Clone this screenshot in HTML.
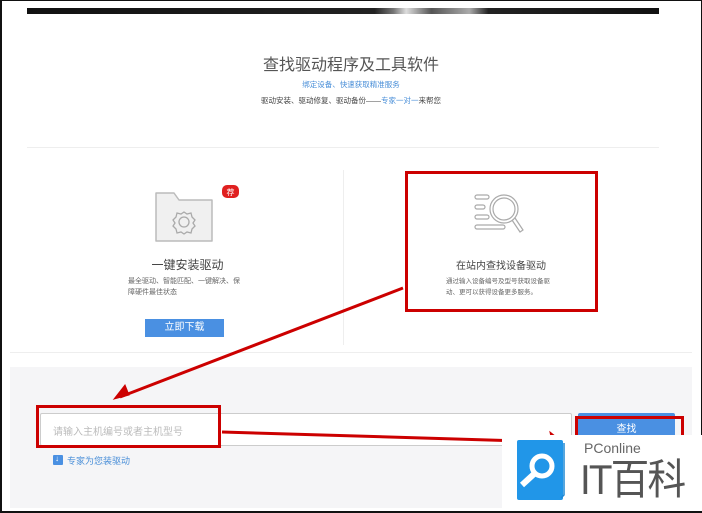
<!DOCTYPE html>
<html><head><meta charset="utf-8"><style>
*{margin:0;padding:0;box-sizing:border-box}
body{width:702px;height:513px;position:relative;overflow:hidden;background:#fff;font-family:"Liberation Sans","Noto Sans CJK SC",sans-serif;color:#555}
.a{position:absolute;white-space:nowrap}
</style></head><body>
<div class="a" style="left:0;top:0;width:702px;height:513px;border:1px solid #111;border-bottom:2px solid #111;border-left:2px solid #111"></div>
<div class="a" style="left:27px;top:8px;width:632px;height:6px;background:linear-gradient(90deg,#111 0%,#222 55%,#777 58%,#ddd 60%,#555 64%,#aaa 70%,#222 73%,#111 100%)"></div>
<div class="a" style="left:0;width:702px;top:51px;text-align:center;font-size:16px;color:#555">查找驱动程序及工具软件</div>
<div class="a" style="left:0;width:702px;top:79px;text-align:center;font-size:7.5px;color:#4a8fd8">绑定设备、快速获取精准服务</div>
<div class="a" style="left:0;width:702px;top:95px;text-align:center;font-size:7.5px;color:#444">驱动安装、驱动修复、驱动备份——<span style="color:#4a8fd8">专家一对一</span>来帮您</div>
<div class="a" style="left:27px;top:147px;width:632px;height:1px;background:#eee"></div>
<div class="a" style="left:343px;top:170px;width:1px;height:175px;background:#eee"></div>
<svg class="a" style="left:150px;top:180px" width="95" height="70">
<path d="M6 13h18l5 7h33v41H6z" fill="#f0f0f0" stroke="#bbb" stroke-width="1.5" stroke-linejoin="round"/>
<circle cx="34" cy="42" r="5" fill="none" stroke="#aaa" stroke-width="1.3"/>
<path d="M34 32l3 2 4-1 1 4 3 3-2 3 2 3-3 3-1 4-4-1-3 2-3-2-4 1-1-4-3-3 2-3-2-3 3-3 1-4 4 1z" fill="none" stroke="#aaa" stroke-width="1.3"/>
<rect x="72" y="5" width="17" height="13" rx="5" fill="#e02020"/>
<text x="80.5" y="15" font-size="8" fill="#fff" text-anchor="middle" font-family="Noto Sans CJK SC">荐</text>
</svg>
<div class="a" style="left:130px;width:115px;top:256px;text-align:center;font-size:12px;color:#444">一键安装驱动</div>
<div class="a" style="left:128px;top:276px;font-size:7px;line-height:11px;color:#666;white-space:normal;width:112px">最全驱动、智能匹配、一键解决、保障硬件最佳状态</div>
<div class="a" style="left:145px;top:319px;width:79px;height:18px;background:#4a90e2;color:#fff;font-size:10px;text-align:center;line-height:18px">立即下载</div>
<svg class="a" style="left:470px;top:190px" width="60" height="55">
<g fill="none" stroke="#aaa" stroke-width="1.2">
<rect x="5" y="5" width="14" height="4" rx="2"/><rect x="5" y="15" width="10" height="4" rx="2"/><rect x="5" y="25" width="14" height="4" rx="2"/><rect x="5" y="35" width="30" height="4" rx="2"/>
<circle cx="34" cy="19" r="14"/><circle cx="34" cy="19" r="11"/>
<path d="M42 30l8 12 3-2-8-12"/></g></svg>
<div class="a" style="left:405px;width:192px;top:257px;text-align:center;font-size:10px;color:#444">在站内查找设备驱动</div>
<div class="a" style="left:446px;top:276px;font-size:6.5px;line-height:11px;color:#666;white-space:normal;width:105px">通过输入设备编号及型号获取设备驱动、更可以获得设备更多服务。</div>
<div class="a" style="left:405px;top:171px;width:193px;height:141px;border:3px solid #c00"></div>
<div class="a" style="left:10px;top:352px;width:682px;height:1px;background:#eee"></div>
<div class="a" style="left:10px;top:367px;width:682px;height:141px;background:#f5f5f7"></div>
<div class="a" style="left:40px;top:413px;width:532px;height:33px;background:#fff;border:1px solid #ccc;border-radius:2px"></div>
<div class="a" style="left:53px;top:423px;font-size:10px;color:#bbb">请输入主机编号或者主机型号</div>
<div class="a" style="left:36px;top:405px;width:185px;height:43px;border:3px solid #c00"></div>
<div class="a" style="left:578px;top:413px;width:97px;height:33px;background:#4a90e2;color:#fff;font-size:10px;text-align:center;line-height:33px;border-radius:2px">查找</div>
<div class="a" style="left:575px;top:416px;width:109px;height:40px;border:3px solid #c00"></div>
<div class="a" style="left:53px;top:455px;width:10px;height:10px;background:#4a90e2;border-radius:1px"></div>
<div class="a" style="left:55px;top:454px;font-size:8px;color:#fff">↓</div>
<div class="a" style="left:67px;top:454px;font-size:9px;color:#4a8fd8">专家为您装驱动</div>
<svg class="a" style="left:0;top:0" width="702" height="513">
<g stroke="#c00" stroke-width="3" fill="#c00">
<line x1="403" y1="288" x2="120" y2="397"/>
<path d="M114 399l11-14 4 10z" stroke-width="1"/>
<line x1="222" y1="432" x2="555" y2="442" />
<path d="M560 440l-10-8 2 10z" stroke-width="1"/>
</g></svg>
<div class="a" style="left:502px;top:435px;width:200px;height:76px;background:#fff"></div>
<div class="a" style="left:517px;top:440px;width:46px;height:60px;background:#2196e8;border-radius:2px"></div>
<svg class="a" style="left:517px;top:440px" width="50" height="60"><circle cx="25" cy="26" r="10" fill="none" stroke="#fff" stroke-width="5"/><path d="M17 34l-12 11" stroke="#fff" stroke-width="6"/><path d="M47 3v52l-3 3" fill="none" stroke="#1e88d4" stroke-width="1.5"/></svg>
<div class="a" style="left:584px;top:440px;font-size:14px;color:#666">PConline</div>
<div class="a" style="left:580px;top:456px;font-size:42px;line-height:48px;color:#555;letter-spacing:-2px;transform:scaleX(0.92);transform-origin:left">IT百科</div>
</body></html>
